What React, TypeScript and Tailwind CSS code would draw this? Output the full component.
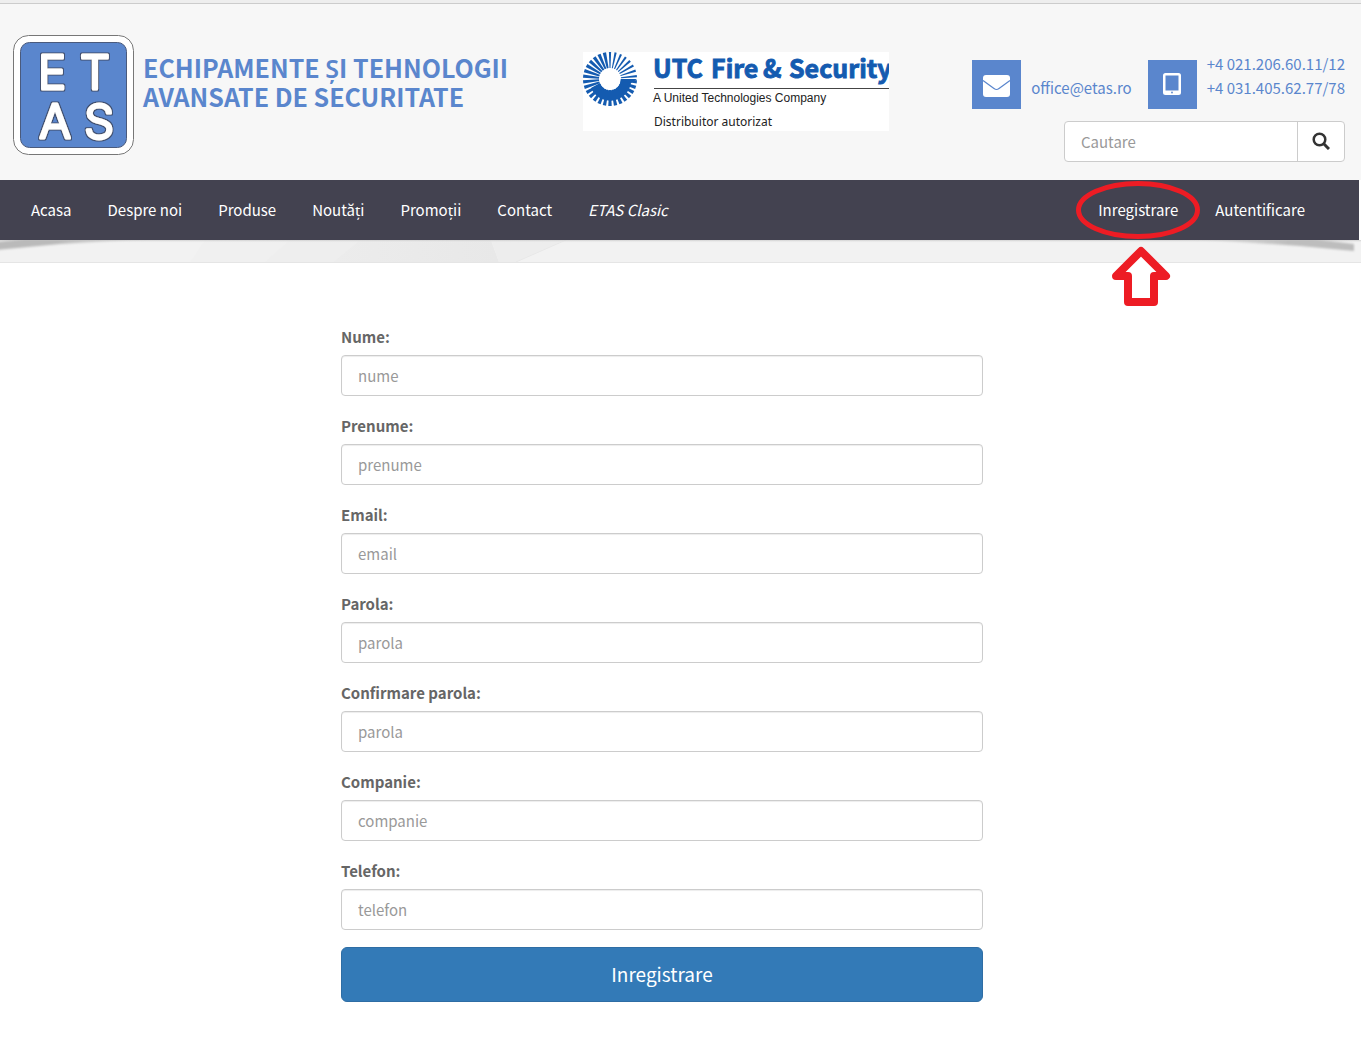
import React from "react";

const fontStack =
  "font-['Source_Sans_Pro','Noto_Sans_CJK_JP','Noto_Sans',sans-serif]";

const fields = [
  { id: "nume", label: "Nume:", placeholder: "nume", type: "text" },
  { id: "prenume", label: "Prenume:", placeholder: "prenume", type: "text" },
  { id: "email", label: "Email:", placeholder: "email", type: "email" },
  { id: "parola", label: "Parola:", placeholder: "parola", type: "password" },
  { id: "confirmare", label: "Confirmare parola:", placeholder: "parola", type: "password" },
  { id: "companie", label: "Companie:", placeholder: "companie", type: "text" },
  { id: "telefon", label: "Telefon:", placeholder: "telefon", type: "tel" },
];

const links = ["Acasa", "Despre noi", "Produse", "Noutăți", "Promoții", "Contact"];

function EtasLogo() {
  const letters = [
    { c: "E", x: 39, y: 54 },
    { c: "T", x: 82, y: 54 },
    { c: "A", x: 42, y: 103 },
    { c: "S", x: 86, y: 103 },
  ];
  return (
    <svg width="122" height="121" viewBox="0 0 122 121" role="img" aria-label="ETAS" className="shrink-0">
      <defs>
        <filter id="outline" x="-10%" y="-10%" width="120%" height="120%">
          <feMorphology in="SourceAlpha" operator="dilate" radius="0.8" result="grown" />
          <feGaussianBlur in="grown" stdDeviation="0.3" result="edge" />
          <feFlood floodColor="#3f4f70" />
          <feComposite in2="edge" operator="in" result="dark" />
          <feMerge>
            <feMergeNode in="dark" />
            <feMergeNode in="SourceGraphic" />
          </feMerge>
        </filter>
      </defs>
      <rect x="0.5" y="0.5" width="120" height="119" rx="15" fill="#fff" stroke="#777" />
      <rect x="7.5" y="7.5" width="106" height="105" rx="9" fill="#5a86cd" stroke="#4a5a7c" />
      <g fontFamily="Inter, sans-serif" fontWeight="300" fontSize="47" textAnchor="middle" strokeLinejoin="round" fill="#fff" stroke="#fff" strokeWidth="3" filter="url(#outline)">
        {letters.map((l) => (
          <text key={l.c} x={l.x} y={l.y}>{l.c}</text>
        ))}
      </g>
    </svg>
  );
}

function UtcLogo() {
  const rays = Array.from({ length: 30 }, (_, i) => i * 12);
  return (
    <svg width="306" height="79" viewBox="0 0 306 79" role="img" aria-label="UTC Fire & Security" className="shrink-0">
      <rect width="306" height="79" fill="#fff" />
      <g fill="#145bb0">
        {rays.map((a) => (
          <path
            key={a}
            d={a > 90 ? "M-0.9 -11 L-1.7 -27 L1.7 -27 L0.9 -11Z" : "M-0.5 -11 L-1.1 -27 L1.1 -27 L0.5 -11Z"}
            transform={`translate(27 27) rotate(${a})`}
          />
        ))}
        <path d="M54 27 L48 31 A21 21 0 0 1 8 36 L17 31 A10.500 10.500 0 0 0 37.500 27Z" />
      </g>
      <circle cx="27" cy="27" r="10.500" fill="#fff" />
      <g fontFamily="'Noto Sans CJK JP', sans-serif" fontWeight="700" fontSize="25" fill="#145bb0" stroke="#145bb0" strokeWidth="0.9">
        <text x="70" y="26">UTC</text>
        <text x="128" y="26">Fire</text>
        <text x="180" y="26">&amp;</text>
        <text x="206" y="26">Security</text>
      </g>
      <path d="M71 36.500H306" stroke="#444" />
      <text x="70" y="50" fontFamily="'Liberation Sans', sans-serif" fontSize="12" fill="#222">A United Technologies Company</text>
      <text x="71" y="74" fontFamily="'Noto Sans', sans-serif" fontSize="12" fill="#222">Distribuitor autorizat</text>
    </svg>
  );
}

function Envelope() {
  return (
    <svg width="27" height="22" viewBox="0 0 27 22" aria-hidden="true" className="mt-0.5">
      <rect width="27" height="22" rx="3" fill="#fff" />
      <path d="M0 5.500 L11 13.500 Q13.500 15.500 16 13.500 L27 5.500" fill="none" stroke="#5a86cd" strokeWidth="1.200" />
    </svg>
  );
}

function Tablet() {
  return (
    <svg width="18" height="22" viewBox="0 0 18 22" aria-hidden="true" className="-mt-0.5">
      <path fillRule="evenodd" fill="#fff" d="M2.500 0h13A2.500 2.500 0 0 1 18 2.500v17a2.500 2.500 0 0 1-2.500 2.500h-13A2.500 2.500 0 0 1 0 19.500v-17A2.500 2.500 0 0 1 2.500 0ZM2.500 2.500v15h13v-15Z" />
      <circle cx="9" cy="19.500" r="0.900" fill="#5a86cd" />
    </svg>
  );
}

function NavShadow() {
  return (
    <svg className="block h-[22px] w-full" viewBox="0 0 1361 22" preserveAspectRatio="none" aria-hidden="true">
      <defs>
        <filter id="soft" x="-5%" y="-50%" width="110%" height="200%"><feGaussianBlur stdDeviation="1.200" /></filter>
        <linearGradient id="facet"><stop offset="0" stopColor="#ececec" /><stop offset="1" stopColor="#e8e8e8" /></linearGradient>
        <linearGradient id="left"><stop offset="0" stopColor="#bababa" /><stop offset="0.4" stopColor="#bababa" /><stop offset="1" stopColor="#bababa" stopOpacity="0" /></linearGradient>
        <linearGradient id="right"><stop offset="0" stopColor="#bdbdbd" stopOpacity="0" /><stop offset="0.6" stopColor="#bdbdbd" /><stop offset="1" stopColor="#bdbdbd" /></linearGradient>
        <linearGradient id="edge" x2="0" y2="1"><stop offset="0" stopColor="#d0d0d0" /><stop offset="1" stopColor="#f2f2f2" stopOpacity="0" /></linearGradient>
      </defs>
      <rect width="1361" height="22" fill="#f2f2f2" />
      <path d="M205 0H290L265 22H190Z" fill="#f0f0f0" />
      <path d="M290 0H360L333 22H265Z" fill="#eeeeee" />
      <path d="M360 0H491L499 22H333Z" fill="url(#facet)" />
      <path d="M491 0H566L516 22H499Z" fill="#ededed" />
      <path d="M566 0L516 22" stroke="#e8e8e8" />
      <rect width="1361" height="3" fill="url(#edge)" />
      <path d="M-5 2L25 -1H150L60 4L-5 10Z" fill="url(#left)" filter="url(#soft)" />
      <path d="M1190 -1H1315L1354 4V11L1300 6Z" fill="url(#right)" filter="url(#soft)" />
    </svg>
  );
}

const navLink = "flex h-[60px] items-center px-[18px] hover:bg-[#5a86cd]";

export default function App() {
  return (
    <div className={`min-h-screen bg-white text-[15px] leading-6 text-[#666] ${fontStack}`}>
      <header className="bg-[#f7f7f7]">
        <div className="h-1 border-b border-[#ccc] bg-[#eee]" />
        <div className="grid h-44 grid-cols-[570fr_762fr] pl-[13px] pr-4">
          <a href="#" className="flex items-start gap-2 pt-[31px] text-[#5a86cd]">
            <EtasLogo />
            <span className="whitespace-nowrap pt-[18px] text-[25px] font-semibold leading-[29px]">
              ECHIPAMENTE ȘI TEHNOLOGII
              <br />
              AVANSATE DE SECURITATE
            </span>
          </a>
          <div className="flex items-start justify-between">
            <div className="pt-12"><UtcLogo /></div>
            <div className="flex flex-col items-end pt-12">
              <div className="flex whitespace-nowrap text-[#5a86cd]">
                <span className="mt-2 flex size-[49px] items-center justify-center bg-[#5a86cd]"><Envelope /></span>
                <a href="mailto:office@etas.ro" className="ml-[10px] mt-6">office@etas.ro</a>
                <span className="ml-4 mt-2 flex size-[49px] items-center justify-center bg-[#5a86cd]"><Tablet /></span>
                <span className="ml-[10px]">+4 021.206.60.11/12<br />+4 031.405.62.77/78</span>
              </div>
              <form role="search" className="mt-3 flex h-[41px] w-[281px] rounded border border-[#ccc] bg-white" onSubmit={(e) => e.preventDefault()}>
                <input aria-label="Cautare" placeholder="Cautare" className="min-w-0 flex-1 rounded-l bg-transparent px-4 outline-none placeholder:text-[#999]" />
                <button aria-label="Caută" className="flex w-[47px] items-center justify-center border-l border-[#ccc] pb-0.5">
                  <svg width="18" height="18" viewBox="0 0 18 18" fill="none" stroke="#333" aria-hidden="true">
                    <circle cx="7.500" cy="7.500" r="5.800" strokeWidth="2.500" />
                    <path d="M11.500 11.500L17 17" strokeWidth="3" />
                  </svg>
                </button>
              </form>
            </div>
          </div>
        </div>
      </header>

      <nav className="mr-0.5 flex h-[60px] justify-between whitespace-nowrap bg-[#434250] pl-[13px] pr-[36px] text-white">
        <div className="flex">
          {links.map((l) => (
            <a key={l} href="#" className={navLink}>{l}</a>
          ))}
          <a href="#" className={`${navLink} italic`}>ETAS Clasic</a>
        </div>
        <div className="flex gap-px">
          <div className="relative">
            <a href="#" className={navLink}>Inregistrare</a>
            <svg className="pointer-events-none absolute -left-1 top-0 z-10" width="124" height="128" viewBox="0 0 124 128" fill="none" stroke="#ed1c24" aria-hidden="true">
              <ellipse cx="62" cy="30" rx="59.500" ry="26.500" strokeWidth="5" />
              <path d="M65 72L86 95H77V122H52V95H43Z" fill="#fff" stroke="none" />
              <path d="M65 71L90 96H78V122H52V96H40Z" strokeWidth="8" strokeLinejoin="round" />
            </svg>
          </div>
          <a href="#" className={navLink}>Autentificare</a>
        </div>
      </nav>
      <div className="border-b border-[#e5e5e5] bg-[#f2f2f2]"><NavShadow /></div>

      <main className="pb-10 pr-[37px] pt-[62px]">
        <form className="mx-auto w-full max-w-[642px]" onSubmit={(e) => e.preventDefault()}>
          <div className="flex flex-col gap-[18px]">
            {fields.map((f) => (
              <div key={f.id} className="flex flex-col gap-[6px]">
                <label htmlFor={f.id} className="font-bold">{f.label}</label>
                <input
                  id={f.id}
                  type={f.type}
                  placeholder={f.placeholder}
                  className="h-[41px] w-full rounded border border-[#ccc] bg-white px-4 shadow-[inset_0_1px_1px_rgba(0,0,0,0.075)] outline-none placeholder:text-[#999] focus:border-[#66afe9]"
                />
              </div>
            ))}
          </div>
          <button className="mt-[17px] h-[55px] w-full rounded-md border border-[#2e6da4] bg-[#337ab7] pb-0.5 text-[19px] text-white">Inregistrare</button>
        </form>
      </main>
    </div>
  );
}
